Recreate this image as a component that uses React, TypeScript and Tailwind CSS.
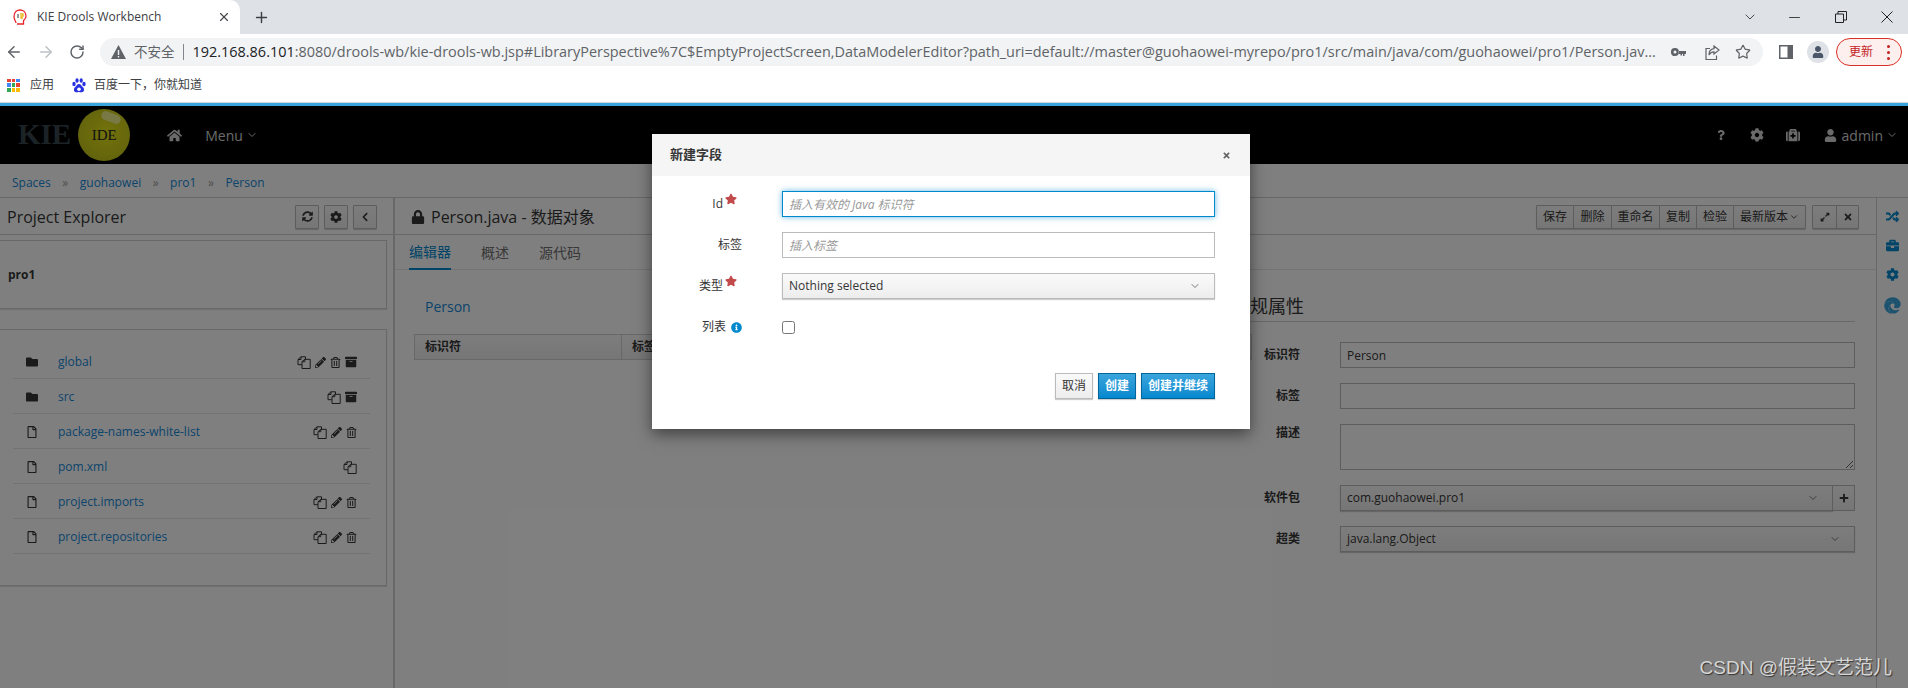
import type { ReactNode } from "react"
import {
  FaArchive,
  FaBriefcase,
  FaChevronLeft,
  FaCog,
  FaEdge,
  FaExpandAlt,
  FaFolder,
  FaHome,
  FaInfoCircle,
  FaLock,
  FaMedkit,
  FaPencilAlt,
  FaPlus,
  FaQuestion,
  FaRandom,
  FaRegFile,
  FaRegTrashAlt,
  FaStar,
  FaSyncAlt,
  FaTimes,
  FaUser,
} from "react-icons/fa"
import { ArrowLeft, ArrowRight, ChevronDown, RotateCw, Star, X, Plus, Minus } from "lucide-react"

const FILES = [
  { name: "global", folder: true, edit: true, trash: true, archive: true },
  { name: "src", folder: true, edit: false, trash: false, archive: true },
  { name: "package-names-white-list", folder: false, edit: true, trash: true, archive: false },
  { name: "pom.xml", folder: false, edit: false, trash: false, archive: false },
  { name: "project.imports", folder: false, edit: true, trash: true, archive: false },
  { name: "project.repositories", folder: false, edit: true, trash: true, archive: false },
]

const TOOLBAR = [
  { label: "保存", w: "w-[37px]" },
  { label: "删除", w: "w-[38px]" },
  { label: "重命名", w: "w-[48px]" },
  { label: "复制", w: "w-[37px]" },
  { label: "检验", w: "w-[37px]" },
]

function CopyIcon() {
  return (
    <svg width="14" height="13" viewBox="0 0 14 13" fill="none" stroke="#363636" strokeWidth="1">
      <path d="M8.5 3.5V.8H4L1 3.5v5.2h4" />
      <path d="M5 8.7V5.7l2.8-2.4h5.4v9.2H5z" fill="none" />
      <path d="M4 .8v2.7H1M7.8 3.3v2.4H5" />
    </svg>
  )
}

function Favicon() {
  return (
    <svg width="14" height="16" viewBox="0 0 14 16" fill="none">
      <path d="M3 14c0-2-2-3-2-6.500C1 3 4 1 7 1s6 2 6 6c0 3-1.500 3.500-2.500 4.500V15H4" stroke="#e8262d" strokeWidth="1.300" />
      <path d="M7 5h3v2H8v2h2" stroke="#e8b71c" strokeWidth="1.300" />
      <path d="M5 5v4" stroke="#333" strokeWidth="1" />
    </svg>
  )
}

function AppsIcon() {
  const colors = ["#ea4335", "#ea4335", "#4285f4", "#4285f4", "#34a853", "#ea4335", "#34a853", "#fbbc04", "#fbbc04"]
  return (
    <div className="grid h-[13px] w-[13px] grid-cols-3 gap-[1px]">
      {colors.map((c, i) => (
        <span key={i} style={{ backgroundColor: c }} />
      ))}
    </div>
  )
}

function BaiduIcon() {
  return (
    <svg width="14" height="15" viewBox="0 0 14 15" fill="#2932e1">
      <ellipse cx="2" cy="6" rx="1.700" ry="2.200" />
      <ellipse cx="5" cy="2.500" rx="1.600" ry="2.200" />
      <ellipse cx="9.200" cy="2.500" rx="1.600" ry="2.200" />
      <ellipse cx="12" cy="6" rx="1.700" ry="2.200" />
      <path d="M7 6c-2 0-2.500 2-4 3.200C1.500 10.500 1.500 14 4 14.300c1.500.2 2-.3 3-.3s1.500.5 3 .3c2.500-.3 2.500-3.800 1-5.100C9.500 8 9 6 7 6z" />
      <circle cx="7" cy="11.300" r="1.800" fill="#fff" />
    </svg>
  )
}

function ChromeBar() {
  return (
    <div className="font-['Open_Sans','Noto_Sans_CJK_SC',sans-serif] text-[#3c4043]">
      {/* tab strip */}
      <div className="flex h-[34px] items-stretch bg-[#dee1e6]">
        <div className="flex w-[240px] items-center rounded-tr-[10px] bg-white pl-[13px] pr-[9px]">
          <Favicon />
          <span className="ml-[10px] flex-1 text-[12px] text-[#3c4043]">KIE Drools Workbench</span>
          <X size={14} strokeWidth={2} className="text-[#45494d]" />
        </div>
        <div className="ml-[13px] flex items-center">
          <Plus size={17} strokeWidth={2} className="text-[#3c4043]" />
        </div>
        <div className="ml-auto flex items-center pr-[15px]">
          <ChevronDown size={16} strokeWidth={1.400} className="text-[#3c4043]" />
          <Minus size={17} strokeWidth={1.200} className="ml-[28px] text-[#222]" />
          <svg className="ml-[32px]" width="12" height="12" viewBox="0 0 12 12" fill="none" stroke="#222" strokeWidth="1">
            <path d="M.5 3h8v8.500h-8zM3 3V.5h8.500V9H8.500" />
          </svg>
          <svg className="ml-[34px]" width="12" height="12" viewBox="0 0 12 12" fill="none" stroke="#222" strokeWidth="1">
            <path d="M.5.500l11 11M11.500.500l-11 11" />
          </svg>
        </div>
      </div>
      {/* toolbar */}
      <div className="flex h-[36px] items-center bg-white">
        <div className="flex w-[100px] items-center gap-[14px] pl-[5px]">
          <ArrowLeft size={18} strokeWidth={2} className="text-[#5f6368]" />
          <ArrowRight size={18} strokeWidth={2} className="text-[#bdc1c6]" />
          <RotateCw size={16} strokeWidth={2.200} className="text-[#5f6368]" />
        </div>
        <div className="flex h-[28px] w-[1663px] items-center rounded-full bg-[#f1f3f4] pl-[11px]">
          <svg width="15" height="14" viewBox="0 0 15 14" fill="#5f6368">
            <path d="M7.500 0 15 14H0zM6.800 5v5h1.400V5zm0 6v1.500h1.400V11z" fillRule="evenodd" />
          </svg>
          <span className="ml-[8px] text-[13.500px] text-[#5f6368]">不安全</span>
          <span className="ml-[8px] h-[16px] w-px bg-[#80868b]" />
          <span className="ml-[9px] w-[1462px] whitespace-nowrap text-[14.450px] text-[#5f6368]">
            <span className="text-[#202124]">192.168.86.101</span>
            :8080/drools-wb/kie-drools-wb.jsp#LibraryPerspective%7C$EmptyProjectScreen,DataModelerEditor?path_uri=default://master@guohaowei-myrepo/pro1/src/main/java/com/guohaowei/pro1/Person.jav...
          </span>
          <svg className="ml-[16px]" width="15" height="9" viewBox="0 0 15 9" fill="#5f6368">
            <path d="M4 0a4 4 0 1 1-.1 8A4 4 0 0 1 4 0zm0 2.500a1.500 1.500 0 1 0 0 3 1.500 1.500 0 0 0 0-3zM7.500 3H15v3h-1.500v2H12V6h-1v1.500H9.500V6h-2z" fillRule="evenodd" />
          </svg>
          <svg className="ml-[19px]" width="15" height="15" viewBox="0 0 15 15" fill="none" stroke="#5f6368" strokeWidth="1.200">
            <path d="M5 3.500H1v11h10.500v-4" />
            <path d="M9 1l5 4-5 4V6.800C6.500 6.800 5 8 4 10c0-4 2-6 5-6.300z" />
          </svg>
          <Star size={16} strokeWidth={1.800} className="ml-[15px] text-[#5f6368]" />
        </div>
        <svg className="ml-[16px]" width="14" height="14" viewBox="0 0 14 14">
          <rect width="14" height="14" fill="#5f6368" />
          <rect x="1.500" y="1.500" width="7" height="11" fill="#fff" />
        </svg>
        <div className="ml-[14px] flex h-[22px] w-[22px] items-center justify-center overflow-hidden rounded-full bg-[#dee1e6]">
          <FaUser size={12} className="text-[#4a5568]" />
        </div>
        <div className="ml-[7px] flex h-[28px] w-[66px] items-center rounded-full border border-[#d93025] bg-[#fcefee] pl-[12px] text-[12px] text-[#c5221f]">
          更新
          <span className="ml-[14px] flex flex-col gap-[3px]">
            <span className="h-[3px] w-[3px] rounded-full bg-[#c5221f]" />
            <span className="h-[3px] w-[3px] rounded-full bg-[#c5221f]" />
            <span className="h-[3px] w-[3px] rounded-full bg-[#c5221f]" />
          </span>
        </div>
      </div>
      {/* bookmarks */}
      <div className="flex h-[33px] items-center border-b border-[#d5d7da] bg-white pb-[2px] pl-[7px] text-[12px] text-[#3c4043]">
        <AppsIcon />
        <span className="ml-[10px]">应用</span>
        <span className="ml-[18px]">
          <BaiduIcon />
        </span>
        <span className="ml-[8px]">百度一下，你就知道</span>
      </div>
    </div>
  )
}

function Logo() {
  return (
    <div className="flex items-center pl-[18px]">
      <span className="font-['Liberation_Serif',serif] text-[29px] font-bold text-[#39474f]">KIE</span>
      <div className="relative ml-[7px] flex h-[52px] w-[52px] items-center justify-center rounded-full bg-[radial-gradient(circle_at_55%_45%,#e6e619,#c8c81a_70%,#a9a920)]">
        <span className="absolute left-[23px] top-[4px] h-[9px] w-[20px] rotate-[20deg] rounded-full bg-[#f2f28a]" />
        <span className="relative font-['Liberation_Serif',serif] text-[15px] text-[#222]">IDE</span>
      </div>
    </div>
  )
}

function NavBar() {
  return (
    <div className="flex h-[58px] items-center bg-black text-[14px] text-[#d4d4d4]">
      <Logo />
      <FaHome size={15} className="ml-[37px]" />
      <span className="ml-[23px]">Menu</span>
      <ChevronDown size={12} strokeWidth={2} className="ml-[3px]" />
      <div className="ml-auto flex items-center pr-[10px]">
        <FaQuestion size={10} />
        <FaCog size={14} className="ml-[24px]" />
        <FaMedkit size={14} className="ml-[22px]" />
        <FaUser size={13} className="ml-[24px]" />
        <span className="ml-[5px]">admin</span>
        <ChevronDown size={12} strokeWidth={2} className="ml-[3px]" />
      </div>
    </div>
  )
}

function Breadcrumb() {
  const items = ["Spaces", "guohaowei", "pro1", "Person"]
  return (
    <div className="flex h-[34px] items-center border-b border-[#d1d1d1] bg-white pl-[12px] pt-[4px] text-[12px] text-[#1488d8]">
      {items.map((item, i) => (
        <span key={item} className="flex items-center">
          {i > 0 && <span className="mx-[11.500px] text-[#9c9c9c]">»</span>}
          {item}
        </span>
      ))}
    </div>
  )
}

function IconButton({ children }: { children: ReactNode }) {
  return (
    <div className="flex h-[24px] w-[24px] items-center justify-center rounded-[1px] border border-[#bbb] bg-gradient-to-b from-[#fafafa] to-[#ededed] text-[#363636] shadow-[0_1px_1px_rgba(3,3,3,0.2)]">
      {children}
    </div>
  )
}

function Explorer() {
  return (
    <div className="w-[395px] shrink-0 border-r-2 border-[#d1d1d1]">
      <div className="flex h-[37px] items-center border-b border-[#d1d1d1] pl-[7px] pr-[16px] pt-[1px]">
        <span className="flex-1 text-[16px] text-[#363636]">Project Explorer</span>
        <div className="flex gap-[5px]">
          <IconButton><FaSyncAlt size={11} /></IconButton>
          <IconButton><FaCog size={12} /></IconButton>
          <IconButton><FaChevronLeft size={10} /></IconButton>
        </div>
      </div>
      <div className="mr-[6px] mt-[5px] flex h-[69px] items-center border border-l-0 border-[#d1d1d1] pl-[8px] shadow-[0_1px_1px_rgba(3,3,3,0.1)]">
        <span className="text-[12px] font-bold text-[#363636]">pro1</span>
      </div>
      <div className="mr-[6px] mt-[20px] h-[257px] border border-l-0 border-[#d1d1d1] pb-[30px] pl-[13px] pr-[16px] pt-[14px] shadow-[0_1px_1px_rgba(3,3,3,0.1)]">
        {FILES.map((file) => (
          <div key={file.name} className="flex h-[35px] items-center border-b border-[#e7e7e7] pl-[13px] pr-[13px] pt-[2px]">
            <span className="flex w-[32px] text-[#363636]">
              {file.folder ? <FaFolder size={12} /> : <FaRegFile size={12} />}
            </span>
            <span className="flex-1 text-[12px] text-[#1488d8]">{file.name}</span>
            <div className="flex items-center gap-[4px] text-[#363636]">
              <CopyIcon />
              {file.edit && <FaPencilAlt size={11} />}
              {file.trash && <FaRegTrashAlt size={11} />}
              {file.archive && <FaArchive size={12} />}
            </div>
          </div>
        ))}
      </div>
    </div>
  )
}

function EditorHeader() {
  return (
    <div className="flex h-[37px] items-center border-b border-[#d1d1d1] pl-[16px] pr-[17px] pt-[1px]">
      <FaLock size={14} className="text-[#363636]" />
      <span className="ml-[6px] flex-1 text-[16px] text-[#363636]">Person.java - 数据对象</span>
      <div className="flex h-[24px] rounded-[1px] border border-[#bbb] bg-gradient-to-b from-[#fafafa] to-[#ededed] text-[12px] text-[#363636] shadow-[0_1px_1px_rgba(3,3,3,0.2)]">
        {TOOLBAR.map((item) => (
          <div key={item.label} className={`${item.w} flex items-center justify-center border-r border-[#bbb]`}>
            {item.label}
          </div>
        ))}
        <div className="flex w-[71px] items-center justify-center">
          最新版本
          <ChevronDown size={10} strokeWidth={2} className="ml-[1px]" />
        </div>
      </div>
      <div className="ml-[6px] flex h-[24px] rounded-[1px] border border-[#bbb] bg-gradient-to-b from-[#fafafa] to-[#ededed] text-[#363636] shadow-[0_1px_1px_rgba(3,3,3,0.2)]">
        <div className="flex w-[24px] items-center justify-center border-r border-[#bbb]"><FaExpandAlt size={10} /></div>
        <div className="flex w-[21px] items-center justify-center"><FaTimes size={10} /></div>
      </div>
    </div>
  )
}

function SelectBox({ text, className }: { text: string; className?: string }) {
  return (
    <div className={`flex h-[26px] items-center justify-between border border-[#bbb] bg-gradient-to-b from-[#fafafa] to-[#ededed] pl-[6px] pr-[13px] text-[12px] text-[#363636] shadow-[0_1px_1px_rgba(3,3,3,0.2)] ${className ?? ""}`}>
      {text}
      <ChevronDown size={12} strokeWidth={1.500} className="text-[#4d5258]" />
    </div>
  )
}

function FormLabel({ text }: { text: string }) {
  return <div className="mr-[40px] w-[68px] shrink-0 text-right text-[12px] font-bold text-[#363636]">{text}</div>
}

function Properties() {
  return (
    <div className="w-[623px] shrink-0">
      <div className="h-[31px] border-b border-[#d1d1d1] text-[18px] leading-[30px] text-[#363636]">常规属性</div>
      <div className="mt-[20px] flex flex-col gap-[15px]">
        <div className="flex items-center">
          <FormLabel text="标识符" />
          <input readOnly defaultValue="Person" className="h-[26px] flex-1 border border-[#bbb] bg-white px-[6px] text-[12px] text-[#363636]" />
        </div>
        <div className="flex items-center">
          <FormLabel text="标签" />
          <input readOnly className="h-[26px] flex-1 border border-[#bbb] bg-white" />
        </div>
        <div className="flex">
          <FormLabel text="描述" />
          <textarea readOnly className="h-[46px] flex-1 border border-[#bbb] bg-white" />
        </div>
        <div className="flex items-center">
          <FormLabel text="软件包" />
          <SelectBox text="com.guohaowei.pro1" className="flex-1" />
          <div className="flex h-[26px] w-[22px] items-center justify-center border border-l-0 border-[#bbb] bg-gradient-to-b from-[#fafafa] to-[#ededed] text-[#363636]">
            <FaPlus size={10} />
          </div>
        </div>
        <div className="flex items-center">
          <FormLabel text="超类" />
          <SelectBox text="java.lang.Object" className="flex-1" />
        </div>
      </div>
    </div>
  )
}

function Editor() {
  return (
    <div className="min-w-0 flex-1">
      <EditorHeader />
      <div className="flex h-[35px] items-stretch gap-[30px] border-b border-[#e7e7e7] pl-[14px] text-[14px] text-[#707070]">
        <div className="-mb-px flex items-center border-b-2 border-[#0088ce] text-[#0088ce]">编辑器</div>
        <div className="flex items-center">概述</div>
        <div className="flex items-center">源代码</div>
      </div>
      <div className="flex pl-[19px] pr-[21px] pt-[21px]">
        <div className="min-w-0 flex-1">
          <div className="mt-[6px] pl-[11px] text-[14px] leading-[20px] text-[#1488d8]">Person</div>
          <div className="mr-[-20px] mt-[17px] flex h-[26px] items-center border border-[#d1d1d1] bg-gradient-to-b from-[#fafafa] to-[#ededed] text-[12px] font-bold text-[#363636]">
            <div className="flex h-full w-[207px] items-center border-r border-[#d1d1d1] pl-[10px]">标识符</div>
            <div className="pl-[10px]">标签</div>
          </div>
        </div>
        <Properties />
      </div>
    </div>
  )
}

function Sidebar() {
  return (
    <div className="flex w-[32px] shrink-0 flex-col items-center gap-[16px] border-l border-[#d1d1d1] pt-[12px] text-[#0088ce]">
      <FaRandom size={13} />
      <FaBriefcase size={13} />
      <FaCog size={13} />
      <FaEdge size={17} className="text-[#39a5dc]" />
    </div>
  )
}

function Required() {
  return <FaStar size={12} className="mb-[10px] ml-[2px] text-[#c24a4a]" />
}

function Modal() {
  const input = "h-[26px] w-[433px] border bg-white px-[6px] text-[12px] placeholder:italic placeholder:text-[#999] outline-none"
  return (
    <div className="absolute left-[652px] top-[28px] w-[598px] bg-white shadow-[0_5px_15px_rgba(0,0,0,0.5)]">
      <div className="flex h-[42px] items-center justify-between bg-[#f5f5f5] pl-[18px] pr-[19px]">
        <span className="text-[13px] font-semibold text-[#363636]">新建字段</span>
        <FaTimes size={9} className="text-[#666]" />
      </div>
      <div className="flex flex-col gap-[15px] pb-[30px] pt-[15px] text-[12px] text-[#363636]">
        <div className="flex h-[26px] items-center">
          <div className="mr-[40px] flex w-[90px] items-center justify-end pr-[5px]">Id<Required /></div>
          <input placeholder="插入有效的 Java 标识符" className={`${input} border-[#0088ce] shadow-[0_0_6px_rgba(0,136,206,0.6)]`} />
        </div>
        <div className="flex h-[26px] items-center">
          <div className="mr-[40px] w-[90px] text-right">标签</div>
          <input placeholder="插入标签" className={`${input} border-[#bbb]`} />
        </div>
        <div className="flex h-[26px] items-center">
          <div className="mr-[40px] flex w-[90px] items-center justify-end pr-[5px]">类型<Required /></div>
          <SelectBox text="Nothing selected" className="w-[433px]" />
        </div>
        <div className="flex h-[26px] items-center">
          <div className="mr-[40px] flex w-[90px] items-center justify-end">
            列表
            <FaInfoCircle size={11} className="ml-[5px] text-[#0088ce]" />
          </div>
          <input type="checkbox" readOnly className="m-0 h-[13px] w-[13px]" />
        </div>
        <div className="mr-[35px] mt-[18px] flex justify-end gap-[5px]">
          <div className="flex h-[26px] w-[38px] items-center justify-center border border-[#bbb] bg-gradient-to-b from-[#fafafa] to-[#ededed] shadow-[0_1px_1px_rgba(3,3,3,0.2)]">取消</div>
          <div className="flex h-[26px] w-[38px] items-center justify-center border border-[#00659c] bg-gradient-to-b from-[#39a5dc] to-[#0088ce] font-bold text-white shadow-[0_1px_1px_rgba(3,3,3,0.2)]">创建</div>
          <div className="flex h-[26px] w-[74px] items-center justify-center border border-[#00659c] bg-gradient-to-b from-[#39a5dc] to-[#0088ce] font-bold text-white shadow-[0_1px_1px_rgba(3,3,3,0.2)]">创建并继续</div>
        </div>
      </div>
    </div>
  )
}

export default function App() {
  return (
    <div className="h-[688px] w-[1908px] overflow-hidden bg-white">
      <ChromeBar />
      <div className="relative flex h-[585px] flex-col border-t-[3px] border-[#39a5dc] font-['Open_Sans','Noto_Sans_CJK_SC',sans-serif]">
        <NavBar />
        <Breadcrumb />
        <div className="flex flex-1">
          <Explorer />
          <Editor />
          <Sidebar />
        </div>
        {/* modal backdrop */}
        <div className="absolute inset-0 bg-black/50" />
        <Modal />
        <div className="absolute bottom-[6px] right-[16px] font-['Liberation_Sans','Noto_Sans_CJK_SC',sans-serif] text-[19px] text-[#d6d6d6] [text-shadow:1px_1px_1px_#333]">
          CSDN @假装文艺范儿
        </div>
      </div>
    </div>
  )
}
